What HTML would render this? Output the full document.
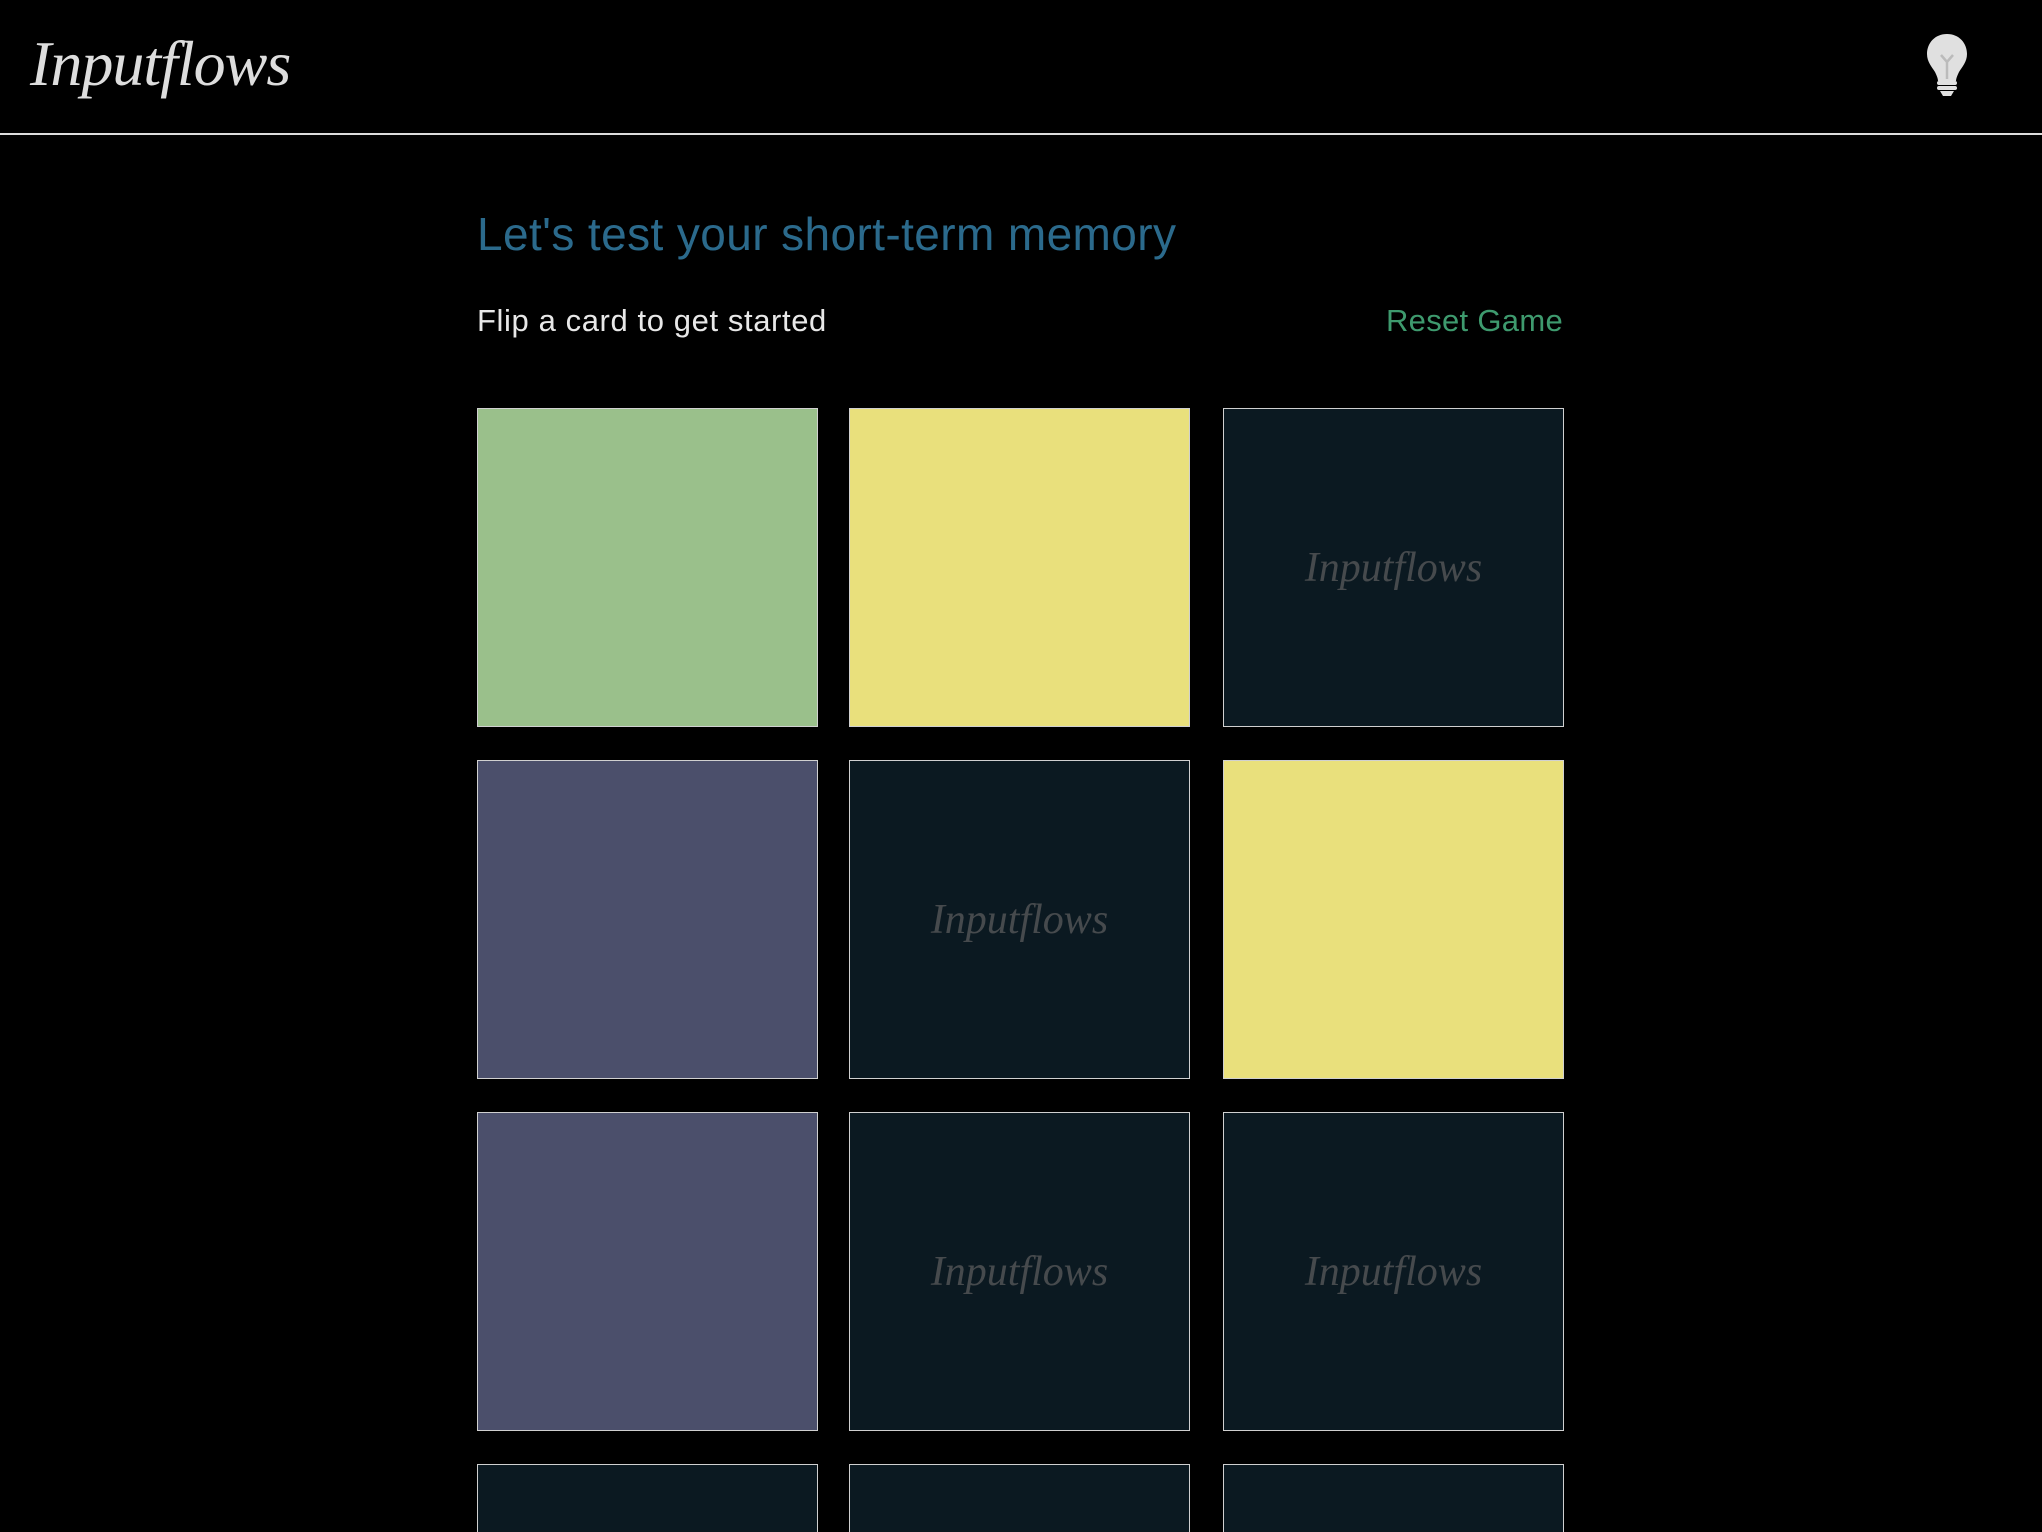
<!DOCTYPE html>
<html><head><meta charset="utf-8"><style>
html,body{margin:0;padding:0;background:#000;width:2042px;height:1532px;overflow:hidden;font-family:"Liberation Sans",sans-serif}
#w{position:relative;width:2042px;height:1532px;overflow:hidden;background:#000}
.hdr{position:absolute;left:0;top:0;width:2042px;height:133px;border-bottom:2px solid #ddd}
.logo{position:absolute;left:30px;top:27px;font-family:"Liberation Serif",serif;font-style:italic;font-size:64px;color:#ddd;letter-spacing:-1px}
.t{position:absolute;left:477px;top:207px;font-size:46px;letter-spacing:0.4px;color:#2b6a8c}
.s{position:absolute;left:477px;top:303px;font-size:31px;letter-spacing:0.6px;color:#e8e8e8}
.r{position:absolute;right:479px;top:303px;font-size:31px;letter-spacing:0.3px;color:#3e9a6e}
.c{position:absolute;width:339px;height:317px;border:1px solid #d0d0d0;box-sizing:content-box;background:#0b1921;display:flex;align-items:center;justify-content:center;font-family:"Liberation Serif",serif;font-style:italic;font-size:42px;color:#464a4d}
.b{height:67px;border-bottom:none}
.g{background:#9ac08b}.y{background:#e9e07c}.p{background:#4b4f6b}
</style></head><body><div id="w">
<div class="hdr"><div class="logo">Inputflows</div>
<svg style="position:absolute;left:1926px;top:33px" width="42" height="64" viewBox="0 0 42 64">
<path d="M21 1C9 1 1 10 1 21c0 8 5 13 8 18 2 4 3 7 3 9h18c0-2 1-5 3-9 3-5 8-10 8-18C41 10 33 1 21 1z" fill="#e0e0e0"/>
<path d="M15 22l6 7 6-7M21 29v17" stroke="#bbb" stroke-width="2.5" fill="none"/>
<rect x="11" y="48" width="20" height="4" rx="2" fill="#e0e0e0"/><rect x="11" y="53" width="20" height="4" rx="2" fill="#e0e0e0"/><path d="M14 58h14l-3 5h-8z" fill="#e0e0e0"/>
</svg></div>
<div class="t">Let's test your short-term memory</div>
<div class="s">Flip a card to get started</div>
<div class="r">Reset Game</div>
<div class="c g" style="left:477px;top:408px"></div>
<div class="c y" style="left:849px;top:408px"></div>
<div class="c" style="left:1223px;top:408px">Inputflows</div>
<div class="c p" style="left:477px;top:760px"></div>
<div class="c" style="left:849px;top:760px">Inputflows</div>
<div class="c y" style="left:1223px;top:760px"></div>
<div class="c p" style="left:477px;top:1112px"></div>
<div class="c" style="left:849px;top:1112px">Inputflows</div>
<div class="c" style="left:1223px;top:1112px">Inputflows</div>
<div class="c b" style="left:477px;top:1464px"></div>
<div class="c b" style="left:849px;top:1464px"></div>
<div class="c b" style="left:1223px;top:1464px"></div>
</div></body></html>
